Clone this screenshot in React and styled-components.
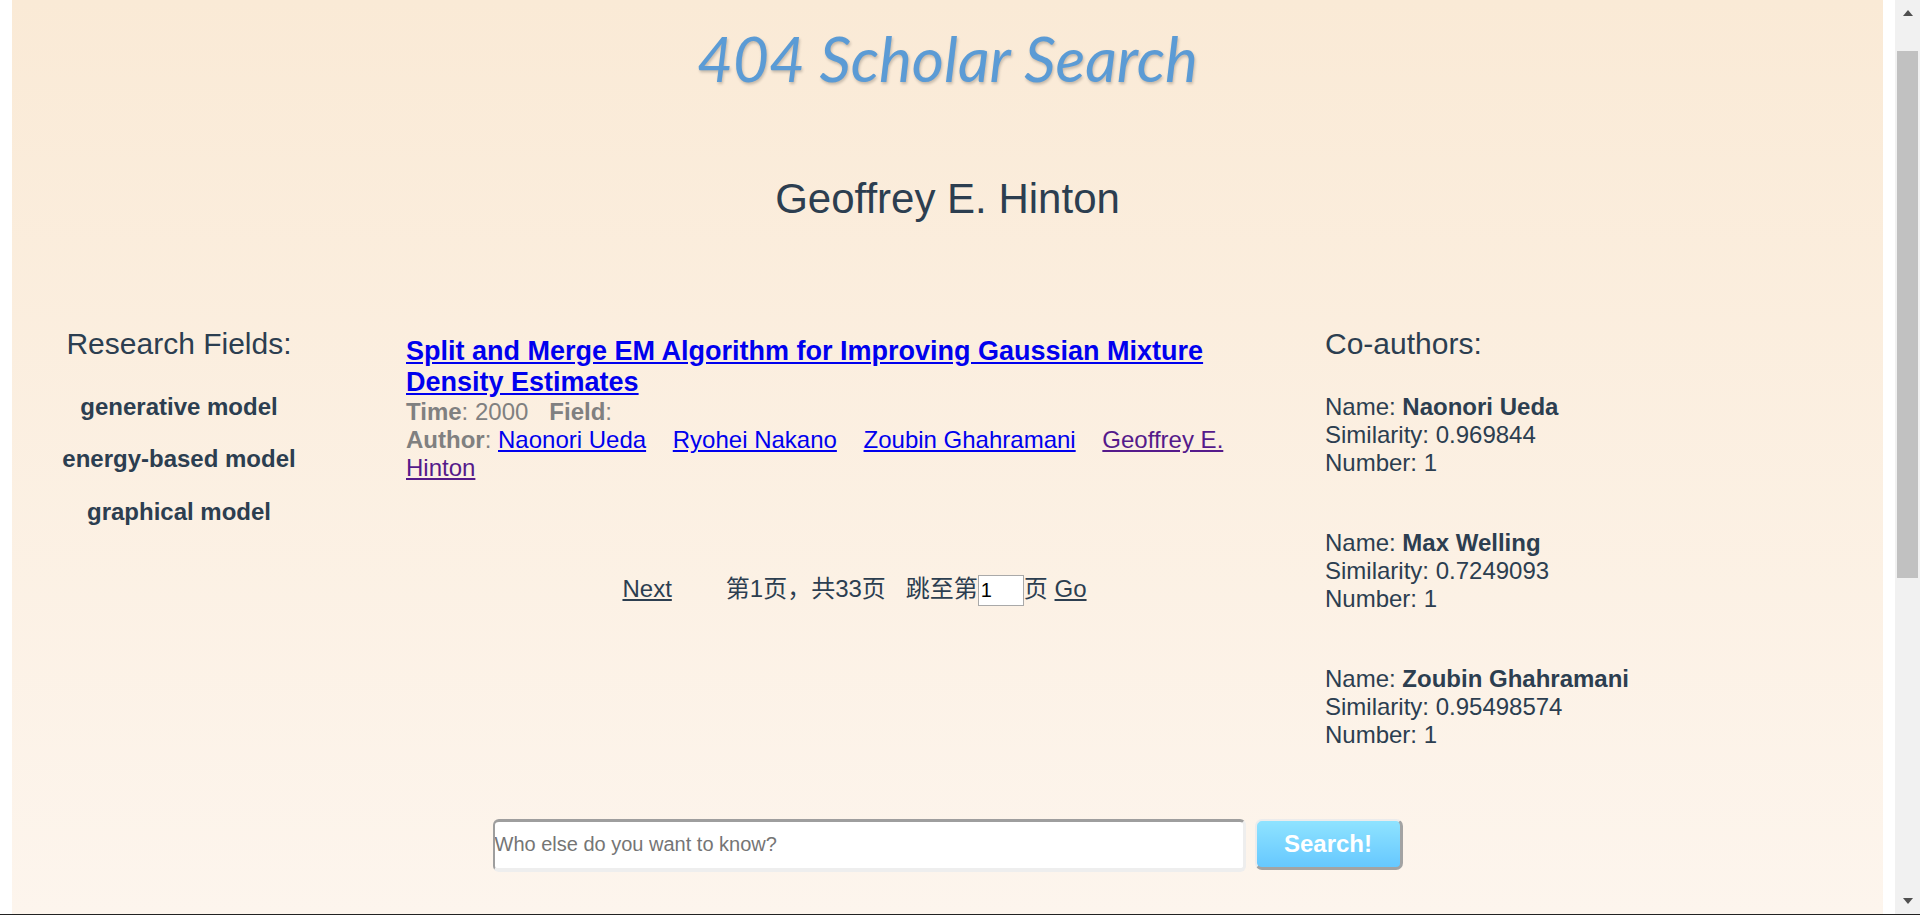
import React from 'react'
import styled, { createGlobalStyle } from 'styled-components'

const GlobalStyle = createGlobalStyle`
  html, body {
    margin: 0;
    padding: 0;
    height: 915px;
    overflow: hidden;
    background: #fff;
  }
  body {
    font-family: "Liberation Sans", Arial, "Noto Sans CJK SC", sans-serif;
    color: #2c3e50;
  }
`

const Frame = styled.div`
  display: flex;
  height: 914px;
  border-bottom: 1px solid #222;
`

const Gutter = styled.div`
  width: 12px;
  flex: none;
  background: #fff;
`

const Page = styled.div`
  flex: 1;
  display: flex;
  flex-direction: column;
  background: linear-gradient(to bottom, #faead6, #fdf5ed);
`

const Logo = styled.h1`
  margin: 0;
  padding-top: 18px;
  font-family: Lato, "Open Sans", sans-serif;
  font-style: italic;
  font-weight: 400;
  font-size: 62px;
  line-height: 80px;
  text-align: center;
  color: #5b9bd5;
  text-shadow: 1px 2px 3px rgba(0, 0, 0, 0.22);
`

const Scholar = styled.h2`
  margin: 77px 0 0;
  font-size: 42px;
  line-height: 48px;
  font-weight: 400;
  text-align: center;
`

const Columns = styled.div`
  display: grid;
  grid-template-columns: 334px 979px 1fr;
  margin-top: 104px;
`

const Side = styled.div`
  text-align: ${(p) => (p.$center ? 'center' : 'left')};
`

const SideTitle = styled.div`
  font-size: 30px;
  line-height: normal;
`

const Field = styled.div`
  font-size: 24px;
  font-weight: bold;
  margin-top: 24.4px;
  ${SideTitle} + & {
    margin-top: 32px;
  }
`

const Middle = styled.div`
  padding: 8.5px 22px 0 60px;
`

const Paper = styled.div`
  font-size: 24px;
`

const PaperTitle = styled.a`
  display: block;
  font-size: 27px;
  font-weight: bold;
  color: #0000ee;
  text-decoration: underline;
  width: 830px;
`

const Meta = styled.div`
  color: #808080;
  margin-top: 0.5px;
  width: 830px;
  b {
    font-weight: bold;
  }
`

const Gap = styled.span`
  display: inline-block;
  width: ${(p) => p.$w}px;
`

const AuthorLink = styled.a`
  color: ${(p) => (p.$visited ? '#551a8b' : '#0000ee')};
  text-decoration: underline;
  margin-right: 20px;
`

const Pager = styled.div`
  margin-top: 89px;
  font-size: 24px;
  line-height: 36px;
  text-align: center;
  white-space: nowrap;
`

const PagerLink = styled.a`
  color: #2c3e50;
  text-decoration: underline;
`

const PageInput = styled.input`
  box-sizing: border-box;
  width: 46px;
  height: 31px;
  padding: 0 2px;
  border: 1px solid #a9a9a9;
  background: #fff;
  font-family: "Liberation Sans", Arial, sans-serif;
  font-size: 20px;
  color: #000;
  vertical-align: middle;
  outline: none;
`

const CoAuthor = styled.div`
  font-size: 24px;
  margin-top: 52.2px;
  ${SideTitle} + & {
    margin-top: 31.5px;
  }
  b {
    font-weight: bold;
  }
`

const SearchRow = styled.div`
  display: flex;
  justify-content: center;
  align-items: flex-start;
  gap: 9px;
  margin-top: 70px;
`

const SearchInput = styled.input`
  box-sizing: border-box;
  width: 753px;
  height: 53px;
  padding: 0;
  border-style: solid;
  border-width: 3px 3px 4px 2px;
  border-color: #9e9e9e #eeeeee #eeeeee #9e9e9e;
  border-radius: 6px;
  background: #fff;
  font-family: "Liberation Sans", Arial, sans-serif;
  font-size: 20px;
  color: #333;
  outline: none;
  &::placeholder {
    color: #757575;
  }
`

const SearchButton = styled.button`
  box-sizing: border-box;
  width: 148px;
  height: 51px;
  border-style: solid;
  border-width: 2px 3px 3px 2px;
  border-color: #ececec #a3a3a3 #a3a3a3 #ececec;
  border-radius: 7px;
  background: linear-gradient(to bottom, #8fe3ff, #66c8ff);
  color: #fff;
  font-family: "Liberation Sans", Arial, sans-serif;
  font-size: 24px;
  font-weight: bold;
  cursor: pointer;
`

const Scrollbar = styled.div`
  width: 25px;
  flex: none;
  background: #f1f1f1;
  display: flex;
  flex-direction: column;
  align-items: center;
`

const Arrow = styled.div`
  width: 0;
  height: 0;
  border-left: 5.5px solid transparent;
  border-right: 5.5px solid transparent;
  ${(p) =>
    p.$down
      ? 'border-top: 6px solid #505050; margin-top: auto; margin-bottom: 10px;'
      : 'border-bottom: 6px solid #505050; margin-top: 10px;'}
`

const Thumb = styled.div`
  width: 21px;
  height: 527px;
  margin-top: 35px;
  background: #c1c1c1;
`

const fields = ['generative model', 'energy-based model', 'graphical model']

const coauthors = [
  { name: 'Naonori Ueda', sim: '0.969844', num: 1 },
  { name: 'Max Welling', sim: '0.7249093', num: 1 },
  { name: 'Zoubin Ghahramani', sim: '0.95498574', num: 1 },
]

const authors = ['Naonori Ueda', 'Ryohei Nakano', 'Zoubin Ghahramani']

export default function App() {
  return (
    <>
      <GlobalStyle />
      <Frame>
        <Gutter />
        <Page>
          <Logo>404 Scholar Search</Logo>
          <Scholar>Geoffrey E. Hinton</Scholar>

          <Columns>
            <Side $center>
              <SideTitle>Research Fields:</SideTitle>
              {fields.map((f) => (
                <Field key={f}>{f}</Field>
              ))}
            </Side>

            <Middle>
              <Paper>
                <PaperTitle href="#">
                  Split and Merge EM Algorithm for Improving Gaussian Mixture Density Estimates
                </PaperTitle>
                <Meta>
                  <b>Time</b>: 2000<Gap $w={21} /><b>Field</b>:
                  <br />
                  <b>Author</b>:{' '}
                  {authors.map((a) => (
                    <React.Fragment key={a}>
                      <AuthorLink href="#">{a}</AuthorLink>{' '}
                    </React.Fragment>
                  ))}
                  <AuthorLink href="#" $visited>
                    Geoffrey E. Hinton
                  </AuthorLink>
                </Meta>
              </Paper>

              <Pager>
                <PagerLink href="#">Next</PagerLink>
                <Gap $w={54} />
                第1页，共33页
                <Gap $w={20} />
                跳至第
                <PageInput defaultValue="1" />页 <PagerLink href="#">Go</PagerLink>
              </Pager>
            </Middle>

            <Side>
              <SideTitle>Co-authors:</SideTitle>
              {coauthors.map((c) => (
                <CoAuthor key={c.name}>
                  Name: <b>{c.name}</b>
                  <br />
                  Similarity: {c.sim}
                  <br />
                  Number: {c.num}
                </CoAuthor>
              ))}
            </Side>
          </Columns>

          <SearchRow>
            <SearchInput placeholder="Who else do you want to know?" />
            <SearchButton>Search!</SearchButton>
          </SearchRow>
        </Page>
        <Gutter />
        <Scrollbar>
          <Arrow />
          <Thumb />
          <Arrow $down />
        </Scrollbar>
      </Frame>
    </>
  )
}
